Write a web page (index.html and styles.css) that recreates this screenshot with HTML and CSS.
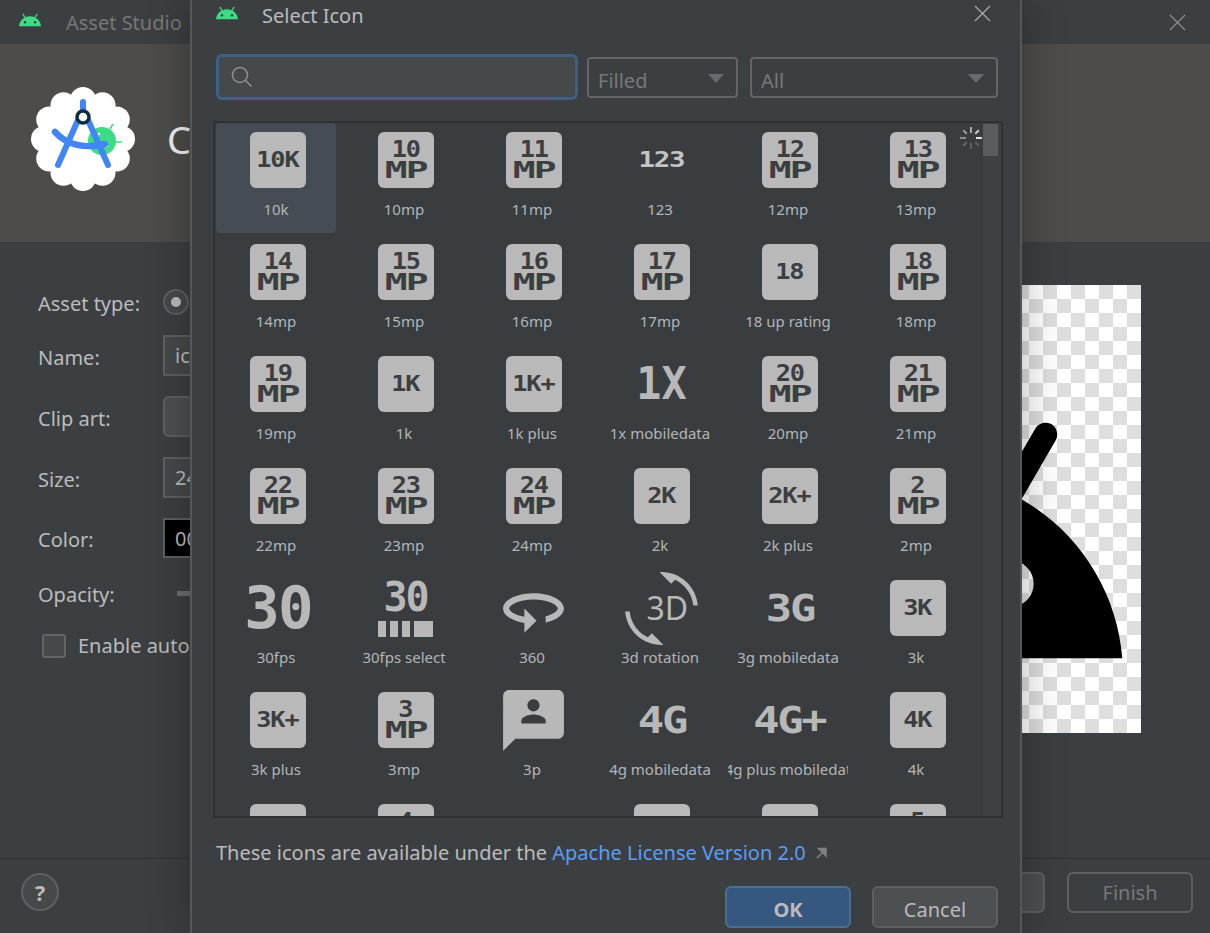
FILE: index.html
```html
<!DOCTYPE html>
<html lang="en">
<head>
<meta charset="utf-8">
<title>Select Icon</title>
<link rel="stylesheet" href="styles.css">
</head>
<body>
<svg class="defs" width="0" height="0" aria-hidden="true">
  <defs>
    <path id="droid" d="M17.6 9.48l1.84-3.18c.16-.31.04-.69-.26-.85-.29-.15-.65-.06-.83.22l-1.88 3.24c-2.86-1.21-6.08-1.21-8.94 0L5.65 5.67c-.19-.29-.58-.38-.87-.2-.28.18-.37.54-.22.83L6.4 9.48C3.3 11.25 1.28 14.44 1 18h22c-.28-3.56-2.3-6.75-5.4-8.52zM7 15.25c-.69 0-1.25-.56-1.25-1.25s.56-1.25 1.25-1.25 1.25.56 1.25 1.25-.56 1.25-1.25 1.25zm10 0c-.69 0-1.25-.56-1.25-1.25s.56-1.25 1.25-1.25 1.25.56 1.25 1.25-.56 1.25-1.25 1.25z"/>
  </defs>
</svg>

<div class="win">
  <header class="win-title">
    <svg class="droid-small" viewBox="1 5.3 22 12.7"><use href="#droid"/></svg>
    <span class="win-name">Asset Studio</span>
    <svg class="x win-x" viewBox="0 0 18 18"><path d="M1 1l16 16M17 1L1 17"/></svg>
  </header>
  <section class="banner">
    <svg class="logo" viewBox="0 0 104 104">
      <g fill="#fff">
        <circle cx="52" cy="52" r="44"/>
        <circle cx="52" cy="13" r="13"/><circle cx="71.500" cy="18.200" r="13"/><circle cx="85.800" cy="32.500" r="13"/>
        <circle cx="91" cy="52" r="13"/><circle cx="85.800" cy="71.500" r="13"/><circle cx="71.500" cy="85.800" r="13"/>
        <circle cx="52" cy="91" r="13"/><circle cx="32.500" cy="85.800" r="13"/><circle cx="18.200" cy="71.500" r="13"/>
        <circle cx="13" cy="52" r="13"/><circle cx="18.200" cy="32.500" r="13"/><circle cx="32.500" cy="18.200" r="13"/>
      </g>
      <circle cx="71" cy="54" r="14" fill="#3ddc84"/>
      <path d="M79 42l3-5M85 55h6" stroke="#3ddc84" stroke-width="1.500" fill="none"/>
      <circle cx="68" cy="47" r="1.300" fill="#fff"/><circle cx="76" cy="59" r="1.300" fill="#fff"/>
      <path d="M52 15v14M47 33L27 78M57 33l20 45" stroke="#4285f4" stroke-width="6" stroke-linecap="round" fill="none"/>
      <path d="M24 45c12 13 30 17 50 12" stroke="#4285f4" stroke-width="6.500" stroke-linecap="round" fill="none"/>
      <circle cx="52" cy="30" r="6" fill="#fff" stroke="#0d2c40" stroke-width="3.500"/>
    </svg>
    <h1 class="banner-title">Configure Image Asset</h1>
  </section>
  <main class="content">
    <form class="form">
      <div class="row row-radio"><span class="lab">Asset type:</span><span class="radio"></span></div>
      <div class="row"><span class="lab">Name:</span><span class="field">ic_baseline</span></div>
      <div class="row"><span class="lab">Clip art:</span><span class="field field-btn"></span></div>
      <div class="row"><span class="lab">Size:</span><span class="field">24</span></div>
      <div class="row row-color"><span class="lab">Color:</span><span class="field field-black">000000</span></div>
      <div class="row row-opacity"><span class="lab">Opacity:</span><span class="slider"></span></div>
      <div class="row-check"><span class="check"></span><span class="lab">Enable auto mirroring</span></div>
    </form>
    <div class="preview">
      <svg class="preview-droid" viewBox="0 -2 24 24"><use href="#droid"/></svg>
    </div>
  </main>
  <footer class="win-foot">
    <span class="help">?</span>
    <span class="foot-btns">
      <span class="btn-bg">Next</span>
      <span class="btn-bg btn-dim">Finish</span>
    </span>
  </footer>
</div>

<div class="dialog">
  <div class="dlg-title">
    <svg class="droid-small dlg-droid" viewBox="1 5.3 22 12.7"><use href="#droid"/></svg>
    <span class="dlg-name">Select Icon</span>
    <svg class="x dlg-x" viewBox="0 0 18 18"><path d="M1 1l16 16M17 1L1 17"/></svg>
  </div>
  <div class="filters">
    <div class="search">
      <svg class="search-ico" viewBox="0 0 22 22"><circle cx="9" cy="9" r="7.500"/><path d="M14.500 14.500l6 6"/></svg>
    </div>
    <div class="combo combo-a">Filled<i class="caret"></i></div>
    <div class="combo combo-b">All<i class="caret"></i></div>
  </div>
  <div class="panel">
    <div class="grid">
      <div class="cell cell-on"><div class="ico"><div class="badge"><span class="wide">10K</span></div></div><span class="lbl">10k</span></div>
      <div class="cell"><div class="ico"><div class="badge"><span class="num">10</span><span class="mp">MP</span></div></div><span class="lbl">10mp</span></div>
      <div class="cell"><div class="ico"><div class="badge"><span class="num">11</span><span class="mp">MP</span></div></div><span class="lbl">11mp</span></div>
      <div class="cell"><div class="ico"><span class="plain plain-s">123</span></div><span class="lbl">123</span></div>
      <div class="cell"><div class="ico"><div class="badge"><span class="num">12</span><span class="mp">MP</span></div></div><span class="lbl">12mp</span></div>
      <div class="cell"><div class="ico"><div class="badge"><span class="num">13</span><span class="mp">MP</span></div></div><span class="lbl">13mp</span></div>

      <div class="cell"><div class="ico"><div class="badge"><span class="num">14</span><span class="mp">MP</span></div></div><span class="lbl">14mp</span></div>
      <div class="cell"><div class="ico"><div class="badge"><span class="num">15</span><span class="mp">MP</span></div></div><span class="lbl">15mp</span></div>
      <div class="cell"><div class="ico"><div class="badge"><span class="num">16</span><span class="mp">MP</span></div></div><span class="lbl">16mp</span></div>
      <div class="cell"><div class="ico"><div class="badge"><span class="num">17</span><span class="mp">MP</span></div></div><span class="lbl">17mp</span></div>
      <div class="cell"><div class="ico"><div class="badge"><span class="wide">18</span></div></div><span class="lbl">18 up rating</span></div>
      <div class="cell"><div class="ico"><div class="badge"><span class="num">18</span><span class="mp">MP</span></div></div><span class="lbl">18mp</span></div>

      <div class="cell"><div class="ico"><div class="badge"><span class="num">19</span><span class="mp">MP</span></div></div><span class="lbl">19mp</span></div>
      <div class="cell"><div class="ico"><div class="badge"><span class="wide">1K</span></div></div><span class="lbl">1k</span></div>
      <div class="cell"><div class="ico"><div class="badge"><span class="wide">1K+</span></div></div><span class="lbl">1k plus</span></div>
      <div class="cell"><div class="ico"><span class="plain plain-l">1X</span></div><span class="lbl">1x mobiledata</span></div>
      <div class="cell"><div class="ico"><div class="badge"><span class="num">20</span><span class="mp">MP</span></div></div><span class="lbl">20mp</span></div>
      <div class="cell"><div class="ico"><div class="badge"><span class="num">21</span><span class="mp">MP</span></div></div><span class="lbl">21mp</span></div>

      <div class="cell"><div class="ico"><div class="badge"><span class="num">22</span><span class="mp">MP</span></div></div><span class="lbl">22mp</span></div>
      <div class="cell"><div class="ico"><div class="badge"><span class="num">23</span><span class="mp">MP</span></div></div><span class="lbl">23mp</span></div>
      <div class="cell"><div class="ico"><div class="badge"><span class="num">24</span><span class="mp">MP</span></div></div><span class="lbl">24mp</span></div>
      <div class="cell"><div class="ico"><div class="badge"><span class="wide">2K</span></div></div><span class="lbl">2k</span></div>
      <div class="cell"><div class="ico"><div class="badge"><span class="wide">2K+</span></div></div><span class="lbl">2k plus</span></div>
      <div class="cell"><div class="ico"><div class="badge"><span class="num">2</span><span class="mp">MP</span></div></div><span class="lbl">2mp</span></div>

      <div class="cell"><div class="ico"><span class="plain plain-xl">30</span></div><span class="lbl">30fps</span></div>
      <div class="cell"><div class="ico ico-col"><span class="plain plain-m">30</span><span class="bars"><i></i><i></i><i></i><i class="bar-w"></i></span></div><span class="lbl">30fps select</span></div>
      <div class="cell"><div class="ico"><svg class="mat" viewBox="0 0 24 24"><path d="M12 7C6.480 7 2 9.240 2 12c0 2.240 2.940 4.130 7 4.770V20l4-4-4-4v2.730c-3.150-.56-5-1.900-5-2.730 0-1.060 3.040-3 8-3s8 1.940 8 3c0 .73-1.460 1.890-4 2.530v2.050c3.530-.77 6-2.530 6-4.580 0-2.760-4.480-5-10-5z"/></svg></div><span class="lbl">360</span></div>
      <div class="cell"><div class="ico"><svg class="mat" viewBox="0 0 24 24"><path d="M7.520 21.480C4.250 19.940 1.910 16.760 1.550 13H.05C.56 19.160 5.710 24 12 24l.66-.03-3.810-3.810-1.330 1.320z"/><path d="M12 0l-.66.03 3.810 3.810 1.330-1.330c3.270 1.550 5.610 4.720 5.960 8.480h1.500C23.440 4.840 18.290 0 12 0z"/></svg><span class="rot3d">3D</span></div><span class="lbl">3d rotation</span></div>
      <div class="cell"><div class="ico"><span class="plain plain-g">3G</span></div><span class="lbl">3g mobiledata</span></div>
      <div class="cell"><div class="ico"><div class="badge"><span class="wide">3K</span></div></div><span class="lbl">3k</span></div>

      <div class="cell"><div class="ico"><div class="badge"><span class="wide">3K+</span></div></div><span class="lbl">3k plus</span></div>
      <div class="cell"><div class="ico"><div class="badge"><span class="num">3</span><span class="mp">MP</span></div></div><span class="lbl">3mp</span></div>
      <div class="cell"><div class="ico"><svg class="mat" viewBox="0 0 24 24"><path d="M20 2H4.010c-1.100 0-2 .9-2 2L2 22l4-4h14c1.100 0 2-.9 2-2V4c0-1.100-.9-2-2-2zm-8 3c1.100 0 2 .9 2 2s-.9 2-2 2-2-.9-2-2 .9-2 2-2zm4 8H8v-1c0-1.330 2.670-2 4-2s4 .67 4 2v1z"/></svg></div><span class="lbl">3p</span></div>
      <div class="cell"><div class="ico"><span class="plain plain-g">4G</span></div><span class="lbl">4g mobiledata</span></div>
      <div class="cell"><div class="ico"><span class="plain plain-g">4G+</span></div><span class="lbl">4g plus mobiledat</span></div>
      <div class="cell"><div class="ico"><div class="badge"><span class="wide">4K</span></div></div><span class="lbl">4k</span></div>

      <div class="cell"><div class="ico"><div class="badge"><span class="wide">4K+</span></div></div><span class="lbl">4k plus</span></div>
      <div class="cell"><div class="ico"><div class="badge"><span class="num">4</span><span class="mp">MP</span></div></div><span class="lbl">4mp</span></div>
      <div class="cell"><div class="ico"><span class="plain plain-g">5G</span></div><span class="lbl">5g</span></div>
      <div class="cell"><div class="ico"><div class="badge"><span class="wide">5K</span></div></div><span class="lbl">5k</span></div>
      <div class="cell"><div class="ico"><div class="badge"><span class="wide">5K+</span></div></div><span class="lbl">5k plus</span></div>
      <div class="cell"><div class="ico"><div class="badge"><span class="num">5</span><span class="mp">MP</span></div></div><span class="lbl">5mp</span></div>
    </div>
    <div class="scroll-track"><div class="scroll-thumb"></div></div>
    <svg class="spinner" viewBox="0 0 24 24">
      <path class="sp1" d="M12 1v6"/><path class="sp2" d="M19.800 4.200l-3.500 3.500"/><path class="sp3" d="M23 12h-6"/><path class="sp4" d="M19.800 19.800l-3.500-3.500"/>
      <path class="sp5" d="M12 23v-6"/><path class="sp6" d="M4.200 19.800l3.500-3.500"/><path class="sp7" d="M1 12h6"/><path class="sp8" d="M4.200 4.200l3.500 3.500"/>
    </svg>
  </div>
  <p class="license">These icons are available under the <a class="link" href="#">Apache License Version 2.0</a><svg class="ext" viewBox="0 0 12 12"><path d="M2 11l7-7M3.500 1.500H11V9z"/></svg></p>
  <div class="dlg-btns">
    <button class="btn btn-ok" type="button">OK</button>
    <button class="btn" type="button">Cancel</button>
  </div>
</div>
</body>
</html>
```

FILE: styles.css
```css
* { box-sizing: border-box; }
html, body { margin: 0; height: 933px; overflow: hidden; background: #3c3f41; }
body { font-family: "Noto Sans", "Open Sans", sans-serif; color: #bbbbbb; position: relative; }
.defs { position: absolute; }

.win { display: flex; flex-direction: column; height: 933px; }
.win-title { height: 44px; flex: none; display: flex; align-items: center; padding: 0 24px 0 19px; background: #3c3f41; }
.droid-small { width: 22px; height: 14px; fill: #3ddc84; flex: none; }
.win-title .droid-small { margin-top: -4px; }
.win-name { margin-left: 25px; font-size: 20px; color: #777777; }
.x { fill: none; stroke: #a9a9a9; stroke-width: 1.3; }
.win-x { width: 17px; height: 17px; margin-left: auto; stroke: #8c8c8c; }

.banner { height: 198px; flex: none; display: flex; align-items: center; padding: 0 0 8px 31px; background: #4d4c4b; }
.logo { width: 104px; height: 104px; flex: none; }
.banner-title { margin: 0 0 0 32px; font-size: 38px; font-weight: 400; color: #f2f2f2; white-space: nowrap; }

.content { flex: 1; display: flex; justify-content: space-between; padding: 43px 69px 0 38px; }
.form { width: 500px; margin-top: -4px; }
.row { display: flex; align-items: center; height: 41px; margin-bottom: 20px; }
.row-radio { margin-bottom: 13px; }
.row-color { margin-bottom: 20px; height: 40px; }
.row-opacity { height: 30px; margin-bottom: 24px; }
.lab { font-size: 20px; white-space: nowrap; }
.row .lab { width: 125px; flex: none; padding-top: 3px; }
.radio { width: 26px; height: 26px; border: 2px solid #5e6060; border-radius: 50%; background: #45494a; display: flex; align-items: center; justify-content: center; }
.radio::after { content: ""; width: 10px; height: 10px; border-radius: 50%; background: #bbbbbb; }
.field { width: 330px; height: 41px; border: 2px solid #5e6060; padding: 0 10px; font-size: 20px; line-height: 37px; background: #45494a; }
.field-btn { border-radius: 6px; background: #4c5052; }
.field-black { background: #000000; height: 40px; }
.slider { width: 300px; height: 5px; margin-left: 14px; background: #6a6d6f; }
.row-check { display: flex; align-items: center; gap: 12px; margin-left: 4px; }
.check { width: 24px; height: 24px; border: 2px solid #646464; border-radius: 3px; background: #45494a; flex: none; }

.preview { width: 448px; height: 448px; flex: none; background-color: #fff; background-image: conic-gradient(#dedede 25%, #fff 25% 50%, #dedede 50% 75%, #fff 75%); background-size: 28px 28px; background-position: 0 0; }
.preview-droid { width: 448px; height: 448px; display: block; fill: #000; }

.win-foot { height: 75px; flex: none; display: flex; align-items: center; justify-content: space-between; padding: 0 17px 8px 21px; border-top: 1px solid #2f3234; }
.help { width: 38px; height: 38px; border-radius: 50%; border: 2px solid #5e6060; background: #45494a; font-size: 22px; font-weight: 700; text-align: center; line-height: 34px; }
.foot-btns { display: flex; gap: 22px; }
.btn-bg { width: 126px; height: 41px; border: 2px solid #5e6060; border-radius: 6px; background: #4c5052; font-size: 20px; line-height: 37px; text-align: center; }
.btn-dim { background: transparent; color: #777777; }

.dialog { position: absolute; left: 190px; top: 0; width: 832px; height: 933px; padding: 0 22px 0 24px; display: flex; flex-direction: column; background: #3c3f41; border-left: 2px solid #55585a; border-right: 2px solid #55585a; box-shadow: 0 0 40px rgba(0, 0, 0, 0.3); }
.dlg-title { height: 30px; flex: none; display: flex; align-items: center; }
.dlg-droid { margin-top: -4px; }
.dlg-name { margin-left: 24px; font-size: 20px; color: #bbbbbb; }
.dlg-x { width: 17px; height: 17px; margin: -4px 7px 0 auto; }

.filters { margin-top: 24px; display: flex; align-items: flex-start; flex: none; }
.search { width: 362px; height: 46px; border: 3px solid #3d6185; border-radius: 6px; background: #45494a; display: flex; align-items: center; padding-left: 12px; }
.search-ico { width: 22px; height: 22px; fill: none; stroke: #8b8e90; stroke-width: 1.6; }
.combo { height: 41px; margin-top: 3px; border: 2px solid #646464; border-radius: 4px; font-size: 20px; line-height: 43px; color: #787878; padding-left: 9px; display: flex; justify-content: space-between; }
.combo-a { width: 151px; margin-left: 9px; }
.combo-b { width: 248px; margin-left: 12px; }
.caret { width: 0; height: 0; margin: 15px 12px 0 0; border-left: 8px solid transparent; border-right: 8px solid transparent; border-top: 9px solid #6a6a6a; }

.panel { position: relative; height: 697px; margin: 21px -5px 0 -3px; border: 2px solid #2f3133; overflow: hidden; flex: none; background: #3a3d40; }
.grid { display: grid; grid-template-columns: repeat(6, 120px); grid-auto-rows: 110px; column-gap: 8px; row-gap: 2px; padding-left: 1px; }
.cell { display: flex; flex-direction: column; align-items: center; padding-top: 9px; border-radius: 4px; min-width: 0; overflow: hidden; }
.cell-on { background: #464c54; }
.ico { position: relative; width: 56px; height: 56px; flex: none; margin-left: 3px; display: flex; align-items: center; justify-content: center; color: #b8b8b8; }
.ico-col { flex-direction: column; }
.badge { width: 56px; height: 56px; border-radius: 6px; background: #b9b9b9; color: #3c3f41; display: flex; flex-direction: column; align-items: center; justify-content: center; font-family: "DejaVu Sans Mono", monospace; font-weight: 700; }
.num { font-size: 23px; line-height: 19px; height: 21px; transform: scaleX(1.1); letter-spacing: -1px; }
.mp { font-size: 23px; line-height: 19px; height: 19px; transform: scaleX(1.65); letter-spacing: -1px; }
.wide { font-size: 22px; line-height: 24px; white-space: nowrap; letter-spacing: -1px; transform: scaleX(1.15); }
.plain { font-family: "DejaVu Sans Mono", monospace; font-weight: 700; white-space: nowrap; line-height: 1; }
.plain-s { font-size: 22px; color: #c4c4c4; transform: scaleX(1.25); letter-spacing: -1px; }
.plain-l { font-size: 44px; color: #b8b8b8; transform: scaleX(0.95); }
.plain-xl { font-size: 58px; letter-spacing: -2px; transform: scaleX(1.02); }
.plain-m { font-size: 40px; line-height: 34px; letter-spacing: -2px; margin-top: -9px; }
.plain-g { font-size: 38px; letter-spacing: -2px; transform: scaleX(1.15); }
.bars { display: flex; gap: 4px; margin-top: 7px; margin-bottom: -9px; }
.bars i { width: 8px; height: 16px; background: #b8b8b8; display: block; }
.bars .bar-w { width: 19px; }
.mat { width: 73px; height: 73px; flex: none; fill: #b8b8b8; }
.rot3d { position: absolute; left: 13px; top: 6px; font-size: 32px; line-height: 44px; color: #b8b8b8; }
.lbl { margin-top: 11px; font-size: 15px; line-height: 20px; white-space: nowrap; color: #b3b5b7; }

.scroll-track { position: absolute; right: 0; top: 0; bottom: 0; width: 18px; background: #3e4143; }
.scroll-thumb { width: 15px; height: 32px; background: #5a5d5f; margin-top: 1px; }
.spinner { position: absolute; left: 744px; top: 3px; width: 24px; height: 24px; fill: none; stroke-width: 2; }
.sp1 { stroke: #a8a8a8; } .sp2 { stroke: #c8c8c8; } .sp3 { stroke: #e0e0e0; } .sp4 { stroke: #5c5f61; }
.sp5 { stroke: #5c5f61; } .sp6 { stroke: #666; } .sp7 { stroke: #8a8a8a; } .sp8 { stroke: #9a9a9a; }

.license { margin: 21px 0 0; height: 28px; font-size: 20px; line-height: 28px; white-space: nowrap; display: flex; align-items: center; flex: none; white-space: pre; }
.link { color: #589df6; text-decoration: none; }
.ext { width: 12px; height: 12px; margin-left: 9px; fill: #7f8284; stroke: #7f8284; stroke-width: 1.5; }

.dlg-btns { margin-top: 19px; display: flex; justify-content: flex-end; gap: 21px; flex: none; }
.btn { width: 126px; height: 42px; padding: 4px 0 0; border: 2px solid #5e6060; border-radius: 6px; background: #4c5052; color: #bbbbbb; font: 400 20px "Noto Sans", sans-serif; }
.btn-ok { background: #365880; border-color: #4c708c; font-weight: 700; }
```
